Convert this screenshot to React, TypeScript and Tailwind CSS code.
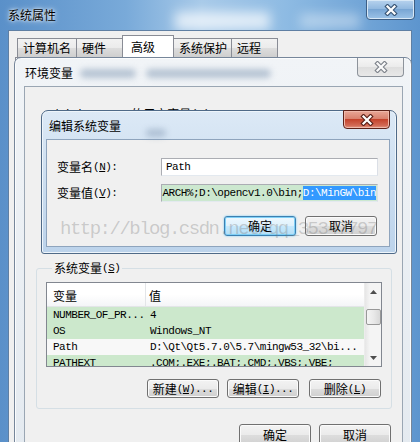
import React from "react";

const CJK = "font-['Noto_Sans_CJK_SC',sans-serif]";
const MONO = "font-['Liberation_Mono','Noto_Sans_CJK_SC',monospace] text-[11px] leading-[14px] tracking-[-0.5px]";

function XGlyph({ outline, fill = "#ffffff" }: { outline: string; fill?: string }) {
  return (
    <svg width="14" height="12" viewBox="0 0 14 12">
      <path d="M3.5 2.5 L10.5 9.5 M10.5 2.5 L3.5 9.5" stroke={outline} strokeWidth="4.4" strokeLinecap="square" fill="none" />
      <path d="M3.5 2.5 L10.5 9.5 M10.5 2.5 L3.5 9.5" stroke={fill} strokeWidth="2.2" strokeLinecap="square" fill="none" />
    </svg>
  );
}

function Mn({ zh, k, tail = "" }: { zh: string; k: string; tail?: string }) {
  return (
    <span className="inline-flex items-center whitespace-nowrap leading-[14px]">
      <span>{zh}</span>
      <span className={MONO}>
        (<span className="underline">{k}</span>){tail}
      </span>
    </span>
  );
}

function Btn({
  children,
  w = "w-[72px]",
  h = "h-[19px]",
  primary = false,
}: {
  children: React.ReactNode;
  w?: string;
  h?: string;
  primary?: boolean;
}) {
  return (
    <div
      className={`${w} ${h} flex items-center justify-center rounded-[3px] border text-[12px] leading-none ${
        primary
          ? "border-[#3c7fb1] bg-[linear-gradient(180deg,#eef8fe_0%,#def1fc_50%,#c7e9fd_50%,#b4def6_100%)] shadow-[inset_0_0_0_1px_#7fd0f6,0_0_2px_#60c6f5]"
          : "border-[#707070] bg-[linear-gradient(180deg,#f3f3f3_0%,#ebebeb_50%,#dddddd_50%,#d0d0d0_100%)] shadow-[inset_0_0_0_1px_#fbfbfb]"
      }`}
    >
      {children}
    </div>
  );
}

function Tab({ label, w, selected = false }: { label: string; w: string; selected?: boolean }) {
  return (
    <div
      className={`${w} -ml-px flex items-center border border-b-0 border-[#898c95] text-[12px] leading-none ${
        selected
          ? "h-[22px] bg-white pl-[8px] z-10"
          : "h-[19px] bg-[linear-gradient(180deg,#f2f2f2_0%,#ebebeb_50%,#dddddd_50%,#cfcfcf_100%)] pl-[5px]"
      }`}
    >
      {label}
    </div>
  );
}

const rows = [
  { n: "NUMBER_OF_PR...", v: "4", green: true },
  { n: "OS", v: "Windows_NT", green: true },
  { n: "Path", v: "D:\\Qt\\Qt5.7.0\\5.7\\mingw53_32\\bi...", green: false },
  { n: "PATHEXT", v: ".COM;.EXE;.BAT;.CMD;.VBS;.VBE;", green: true },
];

function ArrowUp() {
  return (
    <svg width="7" height="4" viewBox="0 0 7 4">
      <path d="M0 4 L3.5 0 L7 4 Z" fill="#4d4d4d" />
    </svg>
  );
}
function ArrowDown() {
  return (
    <svg width="7" height="4" viewBox="0 0 7 4">
      <path d="M0 0 L3.5 4 L7 0 Z" fill="#4d4d4d" />
    </svg>
  );
}

export default function App() {
  return (
    <div
      className={`relative w-[420px] h-[442px] overflow-hidden text-black ${CJK} bg-[linear-gradient(90deg,#5a90c9_0%,#79aad9_30%,#a8cae9_48%,#8ebbe3_68%,#5d95ce_100%)]`}
    >
      {/* outer glass highlights */}
      <div className="absolute left-[175px] top-[12px] w-[95px] h-[18px] bg-white/70 blur-[6px]" />
      <div className="absolute left-[300px] top-[14px] w-[60px] h-[14px] bg-white/40 blur-[6px]" />

      {/* outer title */}
      <div className="absolute left-[8px] top-[7px] text-[12px] leading-[16px] [text-shadow:0_0_6px_#ffffff,0_0_3px_#ffffff]">
        系统属性
      </div>
      <div className="absolute left-[366px] top-[-1px] w-[49px] h-[21px] rounded-b-[4px] border border-[#3d5f86] bg-[linear-gradient(180deg,#b8d3ee_0%,#8fb7df_50%,#79a6d4_50%,#9cc3e8_100%)] shadow-[inset_0_0_0_1px_#d8e8f6] flex items-center justify-center">
        <XGlyph outline="#3a5676" />
      </div>

      {/* outer client */}
      <div className="absolute left-[8px] top-[30px] w-[404px] h-[420px] border border-[#5f7fa3] bg-[#f0f0f0] flex flex-col">
        <div className="flex items-end pl-[9px] pt-[4px]">
          <Tab label="计算机名" w="w-[60px]" />
          <Tab label="硬件" w="w-[47px]" />
          <Tab label="高级" w="w-[52px]" selected />
          <Tab label="系统保护" w="w-[59px]" />
          <Tab label="远程" w="w-[47px]" />
        </div>
        <div className="ml-[6px] mr-[6px] h-[398px] border border-[#898c95] bg-white" />
      </div>

      {/* 环境变量 window */}
      <div className="absolute left-[14px] top-[57px] w-[398px] h-[400px] rounded-t-[7px] border border-[#76869a] bg-[linear-gradient(180deg,#f1f4f7_0%,#e4eaf0_100%)] shadow-[inset_0_0_0_1px_#fbfcfd] flex flex-col pl-[9px] pr-[8px]">
        <div className="relative h-[28px] flex items-center">
          <div className="absolute left-[56px] top-[11px] w-[56px] h-[9px] rounded-full bg-[#8ea3bb] opacity-60 blur-[3px]" />
          <div className="absolute left-[122px] top-[11px] w-[125px] h-[9px] rounded-full bg-[#8ea3bb] opacity-60 blur-[3px]" />
          <span className="relative pl-[1px] pt-[1px] text-[12px] leading-none">环境变量</span>
          <div className="absolute left-[333px] top-0 w-[47px] h-[19px] rounded-b-[4px] border border-t-0 border-[#8d939b] bg-[linear-gradient(180deg,#f6f6f6_0%,#ebebeb_50%,#dedede_50%,#e8e8e8_100%)] flex items-center justify-center">
            <XGlyph outline="#7d828a" fill="#fbfbfb" />
          </div>
        </div>
        <div className="flex-1 border border-[#9aa6b3] bg-[#f0f0f0] flex flex-col">
          <div className="mt-[20px] ml-[21px] h-[14px] text-[12px] leading-[14px] whitespace-nowrap flex items-center">
            <span className={MONO}>Administrator</span>
            <span className="ml-[6px]">的用户变量</span>
            <span className={MONO}>(U)</span>
          </div>
          <div className="h-[140px]" />
          <fieldset className="ml-[11px] mr-[10px] border border-[#d5dfe5] rounded-[3px] px-[9px] pb-[10px]">
            <legend className="ml-[6px] px-[2px] text-[12px] leading-[14px] h-[14px]">
              <Mn zh="系统变量" k="S" />
            </legend>
            <div className="mt-[7px] w-[336px] h-[85px] border border-[#828790] bg-white flex overflow-hidden">
              <div className="flex-1 flex flex-col">
                <div className="h-[24px] shrink-0 flex bg-[linear-gradient(180deg,#ffffff_0%,#ffffff_50%,#f4f5f7_100%)] border-b border-[#e3e5e8]">
                  <div className="w-[99px] pl-[6px] pt-[2px] flex items-center border-r border-[#e3e5e8] text-[12px]">变量</div>
                  <div className="pl-[3px] pt-[2px] flex items-center text-[12px]">值</div>
                </div>
                {rows.map((r) => (
                  <div
                    key={r.n}
                    className={`h-[16px] shrink-0 flex items-center ${r.green ? "bg-[#cce8cc]" : "bg-[#f8f8f8]"}`}
                  >
                    <div className={`w-[100px] pl-[6px] whitespace-nowrap ${MONO}`}>{r.n}</div>
                    <div className={`pl-[3px] whitespace-nowrap ${MONO}`}>{r.v}</div>
                  </div>
                ))}
              </div>
              <div className="w-[17px] bg-[linear-gradient(90deg,#e6e6e6_0%,#f4f4f4_30%,#f4f4f4_100%)] border-l border-[#ececec] flex flex-col items-center">
                <div className="h-[17px] flex items-center justify-center">
                  <ArrowUp />
                </div>
                <div className="mt-[9px] w-[15px] h-[16px] rounded-[2px] border border-[#989898] bg-[linear-gradient(90deg,#f4f4f4_0%,#e9e9e9_50%,#d8d8d8_100%)]" />
                <div className="flex-1" />
                <div className="h-[17px] flex items-center justify-center">
                  <ArrowDown />
                </div>
              </div>
            </div>
            <div className="mt-[12px] flex justify-end gap-[8px] pr-[1px]">
              <Btn>
                <Mn zh="新建" k="W" tail="..." />
              </Btn>
              <div className="mr-[2px]">
                <Btn>
                  <Mn zh="编辑" k="I" tail="..." />
                </Btn>
              </div>
              <Btn>
                <Mn zh="删除" k="L" />
              </Btn>
            </div>
          </fieldset>
          <div className="mt-[15px] mr-[11px] flex justify-end gap-[8px]">
            <Btn h="h-[22px]">确定</Btn>
            <Btn h="h-[22px]">取消</Btn>
          </div>
        </div>
      </div>

      {/* 编辑系统变量 window */}
      <div className="absolute left-[41px] top-[110px] w-[356px] h-[144px] rounded-t-[7px] rounded-b-[3px] border border-[#4f6a88] bg-[linear-gradient(180deg,#dce9f6_0%,#cfe0f1_40%,#bcd3eb_100%)] shadow-[inset_0_0_0_1px_#eef5fb] flex flex-col pl-[4px] pr-[6px] pb-[6px]">
        <div className="relative h-[28px] flex items-center">
          <div className="absolute left-[100px] top-[18px] w-[20px] h-[8px] rounded-full bg-[#6f86a3] opacity-40 blur-[3px]" />
          <span className="relative pl-[3px] pt-[1px] text-[12px] leading-none">编辑系统变量</span>
          <div className="absolute left-[297px] top-[-1px] w-[47px] h-[19px] rounded-b-[4px] border border-[#5d2219] bg-[linear-gradient(180deg,#e8a797_0%,#d9826f_45%,#c4432c_50%,#d26a55_85%,#e39a87_100%)] shadow-[inset_0_0_0_1px_#efb8aa] flex items-center justify-center">
            <XGlyph outline="#5a2018" />
          </div>
        </div>
        <div className="flex-1 border border-[#8ea4bd] bg-[#f0f0f0] flex flex-col pt-[18px] pl-[10px] pr-[11px]">
          <div className="h-[18px] flex items-center">
            <div className="w-[104px] text-[12px]">
              <Mn zh="变量名" k="N" tail=":" />
            </div>
            <div className={`flex-1 h-[18px] border border-[#abadb3] border-b-[#e3e9ef] border-r-[#dbdfe6] bg-white flex items-center pl-[4px] ${MONO}`}>
              Path
            </div>
          </div>
          <div className="mt-[8px] h-[18px] flex items-center">
            <div className="w-[104px] text-[12px]">
              <Mn zh="变量值" k="V" tail=":" />
            </div>
            <div className={`flex-1 h-[18px] border border-[#abadb3] border-b-[#e3e9ef] border-r-[#dbdfe6] bg-[#cce8cf] flex items-center justify-end overflow-hidden whitespace-nowrap pr-[1px] ${MONO}`}>
              <span className="shrink-0">(ARCH%;D:\opencv1.0\bin;</span>
              <span className="shrink-0 bg-[#3399ff] text-white h-[14px] flex items-center">D:\MinGW\bin</span>
            </div>
          </div>
          <div className="mt-[14px] flex justify-end gap-[9px] pr-[1px]">
            <Btn h="h-[20px]" primary>
              确定
            </Btn>
            <Btn h="h-[20px]">取消</Btn>
          </div>
        </div>
      </div>

      {/* watermark */}
      <div className="absolute left-[60px] top-[216px] pointer-events-none whitespace-nowrap font-['Liberation_Mono',monospace] text-[19px] tracking-[-1.5px] leading-[26px] text-[rgba(120,120,120,0.32)]">
        http://blog.csdn.net/qq_35347797
      </div>
    </div>
  );
}
